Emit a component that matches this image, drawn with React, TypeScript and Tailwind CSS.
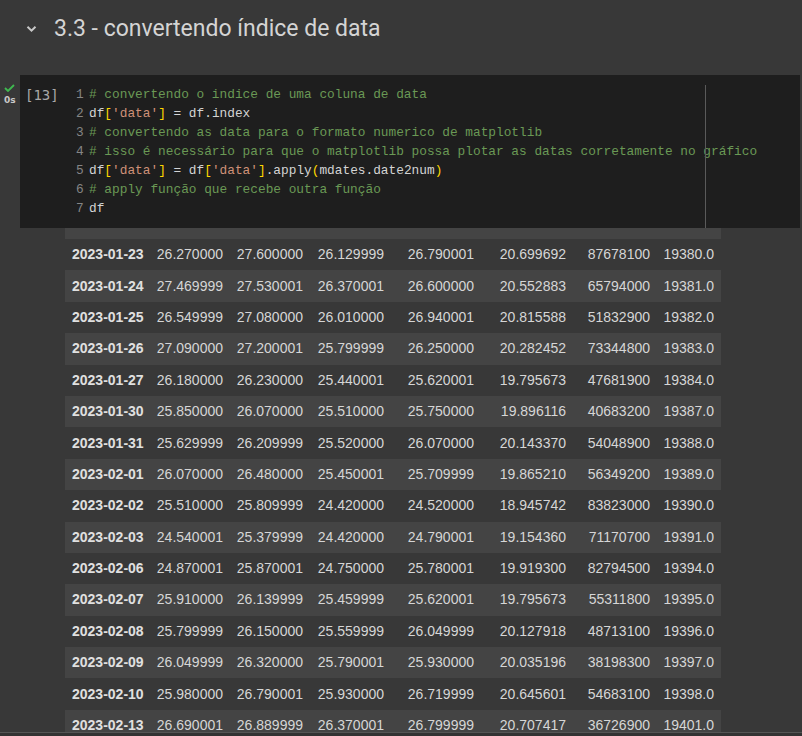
import React from "react";

const rows: string[][] = [
  ["2023-01-23", "26.270000", "27.600000", "26.129999", "26.790001", "20.699692", "87678100", "19380.0"],
  ["2023-01-24", "27.469999", "27.530001", "26.370001", "26.600000", "20.552883", "65794000", "19381.0"],
  ["2023-01-25", "26.549999", "27.080000", "26.010000", "26.940001", "20.815588", "51832900", "19382.0"],
  ["2023-01-26", "27.090000", "27.200001", "25.799999", "26.250000", "20.282452", "73344800", "19383.0"],
  ["2023-01-27", "26.180000", "26.230000", "25.440001", "25.620001", "19.795673", "47681900", "19384.0"],
  ["2023-01-30", "25.850000", "26.070000", "25.510000", "25.750000", "19.896116", "40683200", "19387.0"],
  ["2023-01-31", "25.629999", "26.209999", "25.520000", "26.070000", "20.143370", "54048900", "19388.0"],
  ["2023-02-01", "26.070000", "26.480000", "25.450001", "25.709999", "19.865210", "56349200", "19389.0"],
  ["2023-02-02", "25.510000", "25.809999", "24.420000", "24.520000", "18.945742", "83823000", "19390.0"],
  ["2023-02-03", "24.540001", "25.379999", "24.420000", "24.790001", "19.154360", "71170700", "19391.0"],
  ["2023-02-06", "24.870001", "25.870001", "24.750000", "25.780001", "19.919300", "82794500", "19394.0"],
  ["2023-02-07", "25.910000", "26.139999", "25.459999", "25.620001", "19.795673", "55311800", "19395.0"],
  ["2023-02-08", "25.799999", "26.150000", "25.559999", "26.049999", "20.127918", "48713100", "19396.0"],
  ["2023-02-09", "26.049999", "26.320000", "25.790001", "25.930000", "20.035196", "38198300", "19397.0"],
  ["2023-02-10", "25.980000", "26.790001", "25.930000", "26.719999", "20.645601", "54683100", "19398.0"],
  ["2023-02-13", "26.690001", "26.889999", "26.370001", "26.799999", "20.707417", "36726900", "19401.0"],
];

const C = ({ children }: { children: React.ReactNode }) => (
  <span className="text-[#6a9955]">{children}</span>
);
const B = ({ children }: { children: React.ReactNode }) => (
  <span className="text-[#ffd700]">{children}</span>
);
const S = ({ children }: { children: React.ReactNode }) => (
  <span className="text-[#ce9178]">{children}</span>
);

const codeLines: React.ReactNode[] = [
  <C># convertendo o indice de uma coluna de data</C>,
  <>
    df<B>[</B><S>'data'</S><B>]</B> = df.index
  </>,
  <C># convertendo as data para o formato numerico de matplotlib</C>,
  <C># isso é necessário para que o matplotlib possa plotar as datas corretamente no gráfico</C>,
  <>
    df<B>[</B><S>'data'</S><B>]</B> = df<B>[</B><S>'data'</S><B>]</B>.apply<B>(</B>mdates.date2num<B>)</B>
  </>,
  <C># apply função que recebe outra função</C>,
  <>df</>,
];

export default function App() {
  return (
    <div className="w-[802px] h-[736px] bg-[#383838] overflow-hidden relative flex flex-col">
      {/* Heading */}
      <div className="h-[75px] flex items-start pt-[14px]">
        <div className="w-[54px] flex justify-end pr-[17px] pt-[11px]">
          <svg width="11" height="8" viewBox="0 0 11 8">
            <path d="M1.5 1.8 L5.5 5.6 L9.5 1.8" stroke="#c8c8c8" strokeWidth="2" fill="none" />
          </svg>
        </div>
        <div
          className="text-[23px] leading-[30px] text-[#d4d4d4]"
          style={{ fontFamily: "Roboto, 'Noto Sans', sans-serif" }}
        >
          3.3 - convertendo índice de data
        </div>
      </div>

      {/* Code cell */}
      <div className="flex h-[153px]">
        <div className="w-[20px] relative">
          <svg className="absolute left-[4px] top-[9px]" width="11" height="8" viewBox="0 0 11 8">
            <path d="M1 4 L4 7 L10 1" stroke="#3fb950" strokeWidth="1.8" fill="none" />
          </svg>
          <div
            className="absolute left-[4px] top-[20px] text-[9px] font-bold leading-[10px] text-[#c8c8c8]"
            style={{ fontFamily: "'DejaVu Sans', sans-serif" }}
          >
            0s
          </div>
        </div>
        <div className="flex-1 bg-[#1e1e1e] flex mr-[2px] relative">
          <div
            className="w-[56px] pt-[13px] pl-[5px] text-[14px] leading-[14px] text-[#a8a8a8]"
            style={{ fontFamily: "'DejaVu Sans Mono', monospace" }}
          >
            [13]
          </div>
          <div
            className="pt-[10px] text-[12.8px] leading-[19px] text-[#d4d4d4] whitespace-pre"
            style={{ fontFamily: "'Liberation Mono', 'DejaVu Sans Mono', monospace" }}
          >
            {codeLines.map((l, i) => (
              <div key={i} className="flex">
                <span className="w-[13px] text-[#858585]">{i + 1}</span>
                <span>{l}</span>
              </div>
            ))}
          </div>
          <div className="absolute left-[685px] top-[10px] bottom-0 w-px bg-[#5a5a5a]" />
        </div>
      </div>

      {/* Output table */}
      <div className="flex-1 overflow-hidden pl-[65px] border-b border-[#555]">
        <div
          className="w-[656px] text-[14px] text-[#d6d6d6]"
          style={{ fontFamily: "'Liberation Sans', Arial, sans-serif" }}
        >
          <div className="h-[11px] bg-[#444444]" />
          {rows.map((r, i) => (
            <div
              key={i}
              className={`grid grid-cols-[85px_80px_80px_81px_90px_92px_84px_64px] h-[31.4px] items-center ${
                i % 2 === 1 ? "bg-[#444444]" : "bg-[#383838]"
              }`}
            >
              <div className="pl-[7px] font-bold text-[#e0e0e0]">{r[0]}</div>
              {r.slice(1).map((v, j) => (
                <div key={j} className="text-right pr-[7px]">
                  {v}
                </div>
              ))}
            </div>
          ))}
        </div>
      </div>
      <div className="h-[3px] bg-[#333333]" />
    </div>
  );
}
